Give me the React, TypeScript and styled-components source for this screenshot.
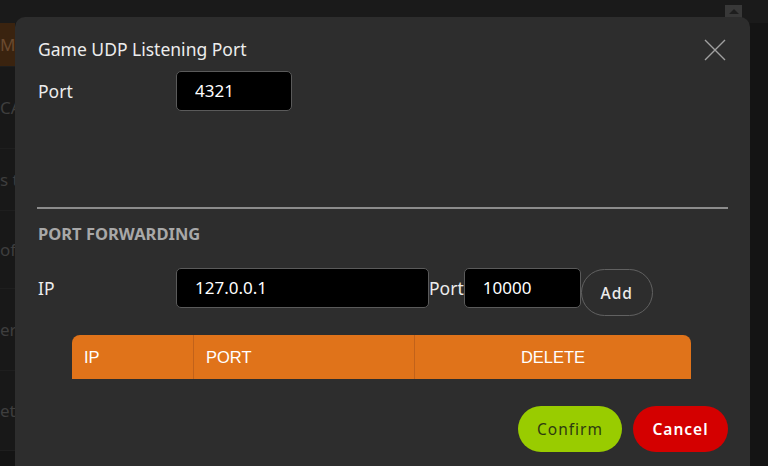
import * as React from 'react';
import styled, { createGlobalStyle } from 'styled-components';

const GlobalStyle = createGlobalStyle`
  html, body {
    margin: 0;
    padding: 0;
    background: #151515;
    overflow: hidden;
  }
  * {
    box-sizing: border-box;
  }
`;

const Page = styled.div`
  position: relative;
  width: 768px;
  height: 466px;
  overflow: hidden;
  background: #141414;
  font-family: 'Noto Sans', 'Open Sans', sans-serif;
`;

const TopBar = styled.div`
  height: 23px;
  background: #1a1a1a;
`;

// only the left edge of the app menu peeks out from behind the dialog
const Sidebar = styled.div`
  display: flex;
  flex-direction: column;
  width: 15px;
  overflow: hidden;
`;

const SideItem = styled.div<{ active?: boolean; h: number }>`
  display: flex;
  align-items: center;
  height: ${({ h }) => h}px;
  border-bottom: 1px solid #1e1e1e;
  background: ${({ active }) => (active ? '#3a230f' : '#181818')};
  color: ${({ active }) => (active ? '#6a4a30' : '#3e3e3e')};
  font-size: 17px;
  white-space: nowrap;
  overflow: hidden;
`;

const ScrollTop = styled.div`
  position: absolute;
  top: 5px;
  left: 725px;
  width: 17px;
  height: 13px;
  background: #383838;
  display: flex;
  justify-content: center;
  align-items: center;

  &::after {
    content: '';
    border-left: 5px solid transparent;
    border-right: 5px solid transparent;
    border-bottom: 5px solid #1e1e1e;
  }
`;

const Modal = styled.div`
  position: absolute;
  top: 17px;
  left: 15px;
  width: 735px;
  height: 470px;
  background: #2d2d2d;
  border-radius: 10px;
  padding: 20px 22px 0 23px;
  color: #ececec;
`;

const CloseButton = styled.button`
  position: absolute;
  top: 22px;
  right: 24px;
  width: 22px;
  height: 22px;
  padding: 0;
  border: none;
  background: none;
  cursor: pointer;
  display: flex;
`;

const Title = styled.div`
  font-size: 17.5px;
  line-height: 24px;
  height: 24px;
`;

const Row = styled.div<{ top: number }>`
  display: flex;
  align-items: flex-start;
  margin-top: ${({ top }) => top}px;
`;

const Label = styled.div<{ w?: number }>`
  width: ${({ w }) => (w ? `${w}px` : 'auto')};
  height: 40px;
  line-height: 40px;
  font-size: 17.5px;
  flex-shrink: 0;
`;

const Input = styled.input<{ w: number }>`
  width: ${({ w }) => w}px;
  height: 40px;
  background: #000;
  border: 1px solid #5a5a5a;
  border-radius: 5px;
  color: #fff;
  font-family: 'Noto Sans', 'Open Sans', sans-serif;
  font-size: 17px;
  padding: 0 0 2px 18px;
  outline: none;
`;

const Divider = styled.div`
  height: 2px;
  margin: 96px 0 0 -1px;
  background: #8c8c8c;
`;

const Section = styled.div`
  margin-top: 14px;
  font-size: 16.5px;
  font-weight: 700;
  color: #a8a8a8;
  line-height: 22px;
`;

const AddButton = styled.button`
  width: 72px;
  height: 47px;
  margin-top: 1px;
  border: 1px solid #616161;
  border-radius: 24px;
  background: transparent;
  color: #ececec;
  font-family: 'Noto Sans', 'Open Sans', sans-serif;
  font-size: 15.5px;
  font-weight: 500;
  letter-spacing: 1px;
  cursor: pointer;
`;

const Table = styled.div`
  display: grid;
  grid-template-columns: 121px 221px 277px;
  width: 619px;
  height: 44px;
  margin: 19px 0 0 34px;
  background: #e0731a;
  border-radius: 8px 8px 0 0;
  overflow: hidden;
  font-family: 'Liberation Sans', Arial, sans-serif;
  font-size: 16.5px;
  color: #fff;
`;

const HeadCell = styled.div<{ center?: boolean }>`
  display: flex;
  align-items: center;
  justify-content: ${({ center }) => (center ? 'center' : 'flex-start')};
  padding-left: ${({ center }) => (center ? 0 : 12)}px;
  border-left: 1px solid #c2621a;

  &:first-child {
    border-left: none;
  }
`;

const Footer = styled.div`
  display: flex;
  justify-content: flex-end;
  gap: 11px;
  margin-top: 27px;
`;

const PillButton = styled.button<{ tone: 'confirm' | 'cancel' }>`
  height: 46px;
  width: ${({ tone }) => (tone === 'confirm' ? 104 : 95)}px;
  border: none;
  border-radius: 23px;
  background: ${({ tone }) => (tone === 'confirm' ? '#99cc00' : '#d40000')};
  color: ${({ tone }) => (tone === 'confirm' ? '#2e3a10' : '#fff')};
  font-family: 'Noto Sans', 'Open Sans', sans-serif;
  font-size: 15.5px;
  font-weight: ${({ tone }) => (tone === 'confirm' ? 400 : 600)};
  letter-spacing: 1px;
  cursor: pointer;
`;

const sideItems = [
  { text: 'MB', h: 44, active: true },
  { text: 'CA', h: 82 },
  { text: 's t', h: 62 },
  { text: 'oft', h: 78 },
  { text: 'eri', h: 82 },
  { text: 'et', h: 80 },
];

export default function App() {
  return (
    <Page>
      <GlobalStyle />
      <TopBar />
      <Sidebar>
        {sideItems.map((it, i) => (
          <SideItem key={i} h={it.h} active={it.active}>
            {it.text}
          </SideItem>
        ))}
      </Sidebar>
      <ScrollTop />
      <Modal>
        <CloseButton aria-label="close">
          <svg width="22" height="22" viewBox="0 0 22 22">
            <path d="M1 1L21 21M21 1L1 21" stroke="#a0a0a0" strokeWidth="1.4" />
          </svg>
        </CloseButton>
        <Title>Game UDP Listening Port</Title>
        <Row top={10}>
          <Label w={138}>Port</Label>
          <Input w={116} defaultValue="4321" />
        </Row>
        <Divider />
        <Section>PORT FORWARDING</Section>
        <Row top={23}>
          <Label w={138}>IP</Label>
          <Input w={253} defaultValue="127.0.0.1" />
          <Label>Port</Label>
          <Input w={117} defaultValue="10000" />
          <AddButton>Add</AddButton>
        </Row>
        <Table>
          <HeadCell>IP</HeadCell>
          <HeadCell>PORT</HeadCell>
          <HeadCell center>DELETE</HeadCell>
        </Table>
        <Footer>
          <PillButton tone="confirm">Confirm</PillButton>
          <PillButton tone="cancel">Cancel</PillButton>
        </Footer>
      </Modal>
    </Page>
  );
}
